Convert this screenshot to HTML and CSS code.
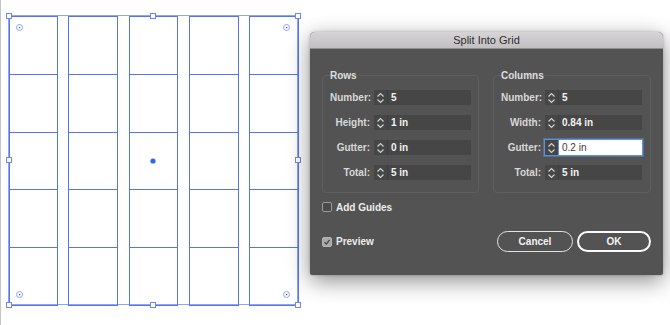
FILE: index.html
```html
<!DOCTYPE html>
<html lang="en">
<head>
    <meta charset="UTF-8">
    <meta name="viewport" content="width=device-width, initial-scale=1.0">
    <title>Split Into Grid</title>
    <link rel="stylesheet" href="styles.css">
</head>
<body>
    <div class="workspace">
        <svg class="artboard" width="309" height="325" viewBox="0 0 309 325">
            <!-- selection bounding box -->
            <rect class="bbox" x="7.5" y="15.5" width="289" height="289"/>
            <!-- grid cells: 5 columns x 5 rows -->
            <g class="cells" id="cells"></g>
            <!-- corner targets -->
            <g class="target"><circle cx="18.5" cy="27.5" r="3"/><rect x="18" y="27" width="1.2" height="1.2"/></g>
            <g class="target"><circle cx="285.5" cy="27.5" r="3"/><rect x="285" y="27" width="1.2" height="1.2"/></g>
            <g class="target"><circle cx="18.5" cy="294.5" r="3"/><rect x="18" y="294" width="1.2" height="1.2"/></g>
            <g class="target"><circle cx="285.5" cy="294.5" r="3"/><rect x="285" y="294" width="1.2" height="1.2"/></g>
            <!-- center point -->
            <circle class="center" cx="152" cy="161" r="2.6"/>
            <!-- handles -->
            <g class="handles">
                <rect x="5.5" y="13.5" width="5" height="5"/>
                <rect x="149.5" y="13.5" width="5" height="5"/>
                <rect x="294.5" y="13.5" width="5" height="5"/>
                <rect x="5.5" y="157.5" width="5" height="5"/>
                <rect x="294.5" y="157.5" width="5" height="5"/>
                <rect x="5.5" y="302.5" width="5" height="5"/>
                <rect x="149.5" y="302.5" width="5" height="5"/>
                <rect x="294.5" y="302.5" width="5" height="5"/>
            </g>
        </svg>

        <div class="dialog">
            <div class="titlebar">Split Into Grid</div>
            <div class="dialog-body">
                <div class="groups">
                    <div class="group">
                        <div class="group-title">Rows</div>
                        <div class="fields">
                            <div class="field-row"><span class="label">Number:</span><div class="field"><span class="spin"><svg width="9" height="12" viewBox="0 0 9 12"><polyline points="1.5,4.5 4.5,1.5 7.5,4.5"/><polyline points="1.5,7.5 4.5,10.5 7.5,7.5"/></svg></span><span class="value">5</span></div></div>
                            <div class="field-row"><span class="label">Height:</span><div class="field"><span class="spin"><svg width="9" height="12" viewBox="0 0 9 12"><polyline points="1.5,4.5 4.5,1.5 7.5,4.5"/><polyline points="1.5,7.5 4.5,10.5 7.5,7.5"/></svg></span><span class="value">1 in</span></div></div>
                            <div class="field-row"><span class="label">Gutter:</span><div class="field"><span class="spin"><svg width="9" height="12" viewBox="0 0 9 12"><polyline points="1.5,4.5 4.5,1.5 7.5,4.5"/><polyline points="1.5,7.5 4.5,10.5 7.5,7.5"/></svg></span><span class="value">0 in</span></div></div>
                            <div class="field-row"><span class="label">Total:</span><div class="field"><span class="spin"><svg width="9" height="12" viewBox="0 0 9 12"><polyline points="1.5,4.5 4.5,1.5 7.5,4.5"/><polyline points="1.5,7.5 4.5,10.5 7.5,7.5"/></svg></span><span class="value">5 in</span></div></div>
                        </div>
                    </div>
                    <div class="group">
                        <div class="group-title">Columns</div>
                        <div class="fields">
                            <div class="field-row"><span class="label">Number:</span><div class="field"><span class="spin"><svg width="9" height="12" viewBox="0 0 9 12"><polyline points="1.5,4.5 4.5,1.5 7.5,4.5"/><polyline points="1.5,7.5 4.5,10.5 7.5,7.5"/></svg></span><span class="value">5</span></div></div>
                            <div class="field-row"><span class="label">Width:</span><div class="field"><span class="spin"><svg width="9" height="12" viewBox="0 0 9 12"><polyline points="1.5,4.5 4.5,1.5 7.5,4.5"/><polyline points="1.5,7.5 4.5,10.5 7.5,7.5"/></svg></span><span class="value">0.84 in</span></div></div>
                            <div class="field-row"><span class="label">Gutter:</span><div class="field focused"><span class="spin"><svg width="9" height="12" viewBox="0 0 9 12"><polyline points="1.5,4.5 4.5,1.5 7.5,4.5"/><polyline points="1.5,7.5 4.5,10.5 7.5,7.5"/></svg></span><span class="value">0.2 in</span></div></div>
                            <div class="field-row"><span class="label">Total:</span><div class="field"><span class="spin"><svg width="9" height="12" viewBox="0 0 9 12"><polyline points="1.5,4.5 4.5,1.5 7.5,4.5"/><polyline points="1.5,7.5 4.5,10.5 7.5,7.5"/></svg></span><span class="value">5 in</span></div></div>
                        </div>
                    </div>
                </div>

                <div class="check-row">
                    <span class="checkbox"></span>
                    <span>Add Guides</span>
                </div>

                <div class="footer">
                    <div class="check-row">
                        <span class="checkbox checked"><svg width="10" height="10" viewBox="0 0 10 10"><polyline points="2.5,5.2 4.3,7 7.6,3"/></svg></span>
                        <span>Preview</span>
                    </div>
                    <div class="buttons">
                        <button class="btn">Cancel</button>
                        <button class="btn default">OK</button>
                    </div>
                </div>
            </div>
        </div>
    </div>

    <script>
        // cells of the split grid (5 x 5, 0.84in columns, 0.2in gutter)
        const cols = [[8, 56], [67, 116], [128, 176], [188, 237], [248, 297]];
        const rows = [16, 74, 132, 189, 247, 305];
        const cells = document.getElementById('cells');
        const ns = 'http://www.w3.org/2000/svg';

        cols.forEach(function (c) {
            for (let r = 0; r < 5; r++) {
                const rect = document.createElementNS(ns, 'rect');
                rect.setAttribute('x', c[0] + 0.5);
                rect.setAttribute('y', rows[r] + 0.5);
                rect.setAttribute('width', c[1] - c[0]);
                rect.setAttribute('height', rows[r + 1] - rows[r]);
                cells.appendChild(rect);
            }
        });
    </script>
</body>
</html>
```

FILE: styles.css
```css
* {
    margin: 0;
    padding: 0;
    box-sizing: border-box;
}

body {
    background: #fff;
    font-family: "Liberation Sans", Arial, sans-serif;
}

.workspace {
    display: flex;
    height: 325px;
    border-left: 1px solid #c4c4c4;
    overflow: hidden;
}

.artboard {
    display: block;
    flex: none;
}

.bbox {
    fill: none;
    stroke: #8fa3f7;
    stroke-width: 1;
}

.cells rect {
    fill: none;
    stroke: #5673f2;
    stroke-width: 1;
}

.target circle {
    fill: #fff;
    stroke: #8ea2f6;
    stroke-width: 1;
}

.target rect {
    fill: #2746c9;
}

.center {
    fill: #2b65f4;
}

.handles rect {
    fill: #fff;
    stroke: #6d86f3;
    stroke-width: 1;
}

/* dialog */

.dialog {
    flex: none;
    width: 353px;
    height: 243px;
    margin-top: 32px;
    background: #535353;
    border-radius: 5px 5px 2px 2px;
    box-shadow: 0 6px 22px rgba(0, 0, 0, 0.45), 0 0 3px rgba(0, 0, 0, 0.25);
    color: #e6e6e6;
}

.titlebar {
    height: 17px;
    line-height: 16px;
    text-align: center;
    font-size: 11px;
    color: #2e2e2e;
    background: linear-gradient(#d6d4d6, #c2c0c2);
    border-bottom: 1px solid #8f8f8f;
    border-radius: 5px 5px 0 0;
}

.dialog-body {
    padding: 26px 12px 0 12px;
}

.groups {
    display: flex;
    gap: 14px;
}

.group {
    flex: none;
    width: 157px;
    border: 1px solid #5f5f5f;
    border-radius: 4px;
    padding: 0 6px 12px 7px;
}

.group + .group {
    width: 158px;
}

.group-title {
    margin-top: -6px;
    height: 12px;
    line-height: 12px;
    font-size: 10px;
    font-weight: bold;
    color: #dedede;
}

.fields {
    margin-top: 8px;
    display: flex;
    flex-direction: column;
    gap: 10px;
}

.field-row {
    display: flex;
    align-items: center;
    gap: 4px;
    height: 15px;
}

.label {
    width: 40px;
    text-align: right;
    font-size: 10px;
    font-weight: bold;
    color: #d8d8d8;
    white-space: nowrap;
}

.field {
    display: flex;
    width: 97px;
    height: 15px;
    background: #464646;
}

.spin {
    width: 14px;
    display: flex;
    align-items: center;
    justify-content: center;
    border-right: 1px solid #3e3e3e;
}

.spin polyline {
    fill: none;
    stroke: #d0d0d0;
    stroke-width: 1.2;
}

.value {
    padding-left: 3px;
    line-height: 15px;
    font-size: 10px;
    font-weight: bold;
    color: #f2f2f2;
}

.field.focused {
    outline: 1px solid #5b93dc;
    box-shadow: 0 0 0 2px rgba(91, 147, 220, 0.45);
}

.field.focused .spin {
    border-right: 1px solid #5b93dc;
}

.field.focused .value {
    flex: 1;
    background: #fff;
    color: #3a3a3a;
    font-weight: normal;
}

/* checkboxes & buttons */

.check-row {
    display: flex;
    align-items: center;
    gap: 4px;
    height: 12px;
    margin-top: 8px;
    font-size: 10px;
    font-weight: bold;
    color: #ececec;
}

.checkbox {
    width: 10px;
    height: 10px;
    border: 1px solid #9a9a9a;
    border-radius: 2px;
    background: #4a4a4a;
    display: flex;
}

.checkbox.checked {
    background: #a9a9a9;
    border-color: #b4b4b4;
}

.checkbox.checked svg {
    margin: -1px;
}

.checkbox polyline {
    fill: none;
    stroke: #4a4a4a;
    stroke-width: 1.3;
}

.footer {
    margin-top: 18px;
    display: flex;
    justify-content: space-between;
    align-items: center;
}

.footer .check-row {
    margin-top: 0;
}

.buttons {
    display: flex;
    gap: 4px;
}

.btn {
    width: 76px;
    height: 21px;
    border: 1.5px solid #e4e4e4;
    border-radius: 11px;
    background: transparent;
    color: #f4f4f4;
    font-family: "Liberation Sans", Arial, sans-serif;
    font-size: 10px;
    font-weight: bold;
}

.btn.default {
    width: 74px;
    border: 2px solid #fafafa;
}
```
